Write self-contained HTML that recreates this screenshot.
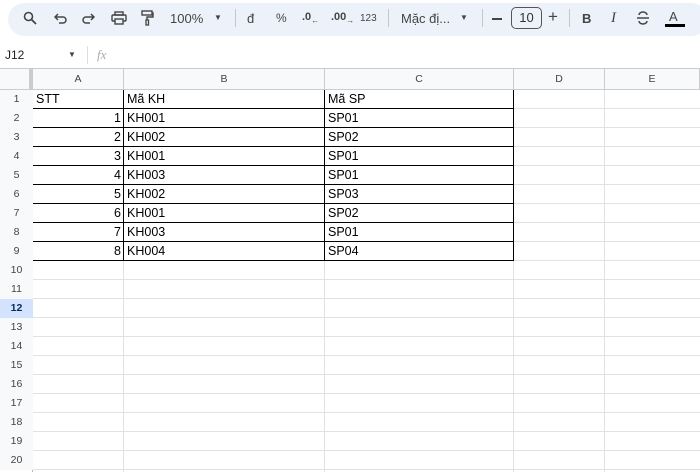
<!DOCTYPE html><html><head><meta charset="utf-8"><style>
*{margin:0;padding:0;box-sizing:border-box}
body{width:700px;height:472px;overflow:hidden;background:#fff;font-family:"Liberation Sans",Arial,sans-serif;position:relative;color:#222}
.a{position:absolute}
.tb{left:8px;top:3px;width:700px;height:33px;background:#edf2fa;border-radius:17px}
.t{position:absolute;top:11px;font-size:13px;color:#444}
.sep{position:absolute;top:9px;width:1px;height:18px;background:#c7c7c7}
.cell{position:absolute;font-size:12.5px;line-height:19px;height:19px;color:#000}
.rh{position:absolute;left:0;width:33px;text-align:center;font-size:10.5px;color:#444;line-height:19px;background:#f8f9fa}
.ch{position:absolute;top:69px;height:21px;line-height:21px;text-align:center;font-size:10.5px;color:#444;background:#f8f9fa;border-right:1px solid #ccc;border-bottom:1px solid #ccc}
</style></head><body>
<div class="a tb"></div>
<svg class="a" style="left:23px;top:11px" width="14" height="14" viewBox="0 0 14 14"><circle cx="5.5" cy="5.5" r="4" fill="none" stroke="#444" stroke-width="1.6"/><path d="M8.5 8.5L13 13" stroke="#444" stroke-width="1.8"/></svg>
<svg class="a" style="left:54px;top:12px" width="14" height="12" viewBox="0 0 14 12"><path d="M4 2L1 5l3 3M1 5h8a3 3 0 010 6H5" fill="none" stroke="#444" stroke-width="1.5"/></svg>
<svg class="a" style="left:81px;top:12px" width="14" height="12" viewBox="0 0 14 12"><path d="M10 2l3 3-3 3M13 5H5a3 3 0 000 6h4" fill="none" stroke="#444" stroke-width="1.5"/></svg>
<svg class="a" style="left:111px;top:11px" width="16" height="14" viewBox="0 0 16 14"><rect x="4" y="1" width="8" height="3" fill="none" stroke="#444" stroke-width="1.4"/><rect x="1" y="4" width="14" height="6" rx="1" fill="none" stroke="#444" stroke-width="1.4"/><rect x="4" y="8" width="8" height="5" fill="#edf2fa" stroke="#444" stroke-width="1.4"/></svg>
<svg class="a" style="left:141px;top:10px" width="13" height="16" viewBox="0 0 13 16"><rect x="1" y="1" width="10" height="4" fill="none" stroke="#444" stroke-width="1.4"/><path d="M11 3h1v4H6v3" fill="none" stroke="#444" stroke-width="1.4"/><rect x="5" y="10" width="2.5" height="5" fill="none" stroke="#444" stroke-width="1.3"/></svg>
<div class="t" style="left:170px;font-size:13px">100%</div>
<div class="t" style="left:214px;top:13px;font-size:8px">▼</div>
<div class="sep" style="left:235px"></div>
<div class="t" style="left:247px">đ</div>
<div class="t" style="left:276px;font-size:12px">%</div>
<div class="t" style="left:302px;font-size:11px;font-weight:bold">.0<sub style="font-size:8px">←</sub></div>
<div class="t" style="left:331px;font-size:11px;font-weight:bold">.00<sub style="font-size:8px">→</sub></div>
<div class="t" style="left:360px;font-size:10px;top:13px">123</div>
<div class="sep" style="left:388px"></div>
<div class="t" style="left:401px">Mặc đị...</div>
<div class="t" style="left:460px;top:13px;font-size:8px">▼</div>
<div class="sep" style="left:482px"></div>
<div class="a" style="left:492px;top:18px;width:10px;height:1.5px;background:#444"></div>
<div class="a" style="left:511px;top:7px;width:31px;height:22px;border:1px solid #555;border-radius:5px;font-size:13px;text-align:center;line-height:20px;color:#333">10</div>
<div class="t" style="left:548px;font-size:17px;top:7px">+</div>
<div class="sep" style="left:569px"></div>
<div class="t" style="left:582px;font-weight:bold">B</div>
<div class="t" style="left:611px;font-style:italic;font-family:'Liberation Serif',serif;font-size:15px;top:10px">I</div>
<svg class="a" style="left:636px;top:11px" width="14" height="14" viewBox="0 0 14 14"><path d="M3 4a4 3 0 018 0M3 10a4 3 0 008 0" fill="none" stroke="#444" stroke-width="1.5"/><path d="M1 7h12" stroke="#444" stroke-width="1.5"/></svg>
<div class="t" style="left:669px;top:9px">A</div>
<div class="a" style="left:665px;top:24px;width:20px;height:3px;background:#000"></div>
<div class="a" style="left:5px;top:48px;font-size:12px;color:#222">J12</div>
<div class="a" style="left:68px;top:50px;font-size:8px;color:#444">▼</div>
<div class="a" style="left:87px;top:46px;width:1px;height:18px;background:#ddd"></div>
<div class="a" style="left:97px;top:47px;font-size:13px;color:#aaa;font-style:italic;font-family:'Liberation Serif',serif">fx</div>
<div class="a" style="left:0;top:68px;width:700px;height:1px;background:#ccc"></div>
<div class="ch" style="left:0;width:33px;border-right:4px solid #ccc"></div>
<div class="ch" style="left:33px;width:91px">A</div>
<div class="ch" style="left:124px;width:201px">B</div>
<div class="ch" style="left:325px;width:189px">C</div>
<div class="ch" style="left:514px;width:91px">D</div>
<div class="ch" style="left:605px;width:95px">E</div>
<svg class="a" style="left:0;top:90px" width="700" height="382">
<g stroke="#e2e2e2" stroke-width="1">
<line x1="123.5" y1="0" x2="123.5" y2="382"/><line x1="324.5" y1="0" x2="324.5" y2="382"/><line x1="513.5" y1="0" x2="513.5" y2="382"/><line x1="604.5" y1="0" x2="604.5" y2="382"/>
<path d="M33 18.5H700M33 37.5H700M33 56.5H700M33 75.5H700M33 94.5H700M33 113.5H700M33 132.5H700M33 151.5H700M33 170.5H700M33 189.5H700M33 208.5H700M33 227.5H700M33 246.5H700M33 265.5H700M33 284.5H700M33 303.5H700M33 322.5H700M33 341.5H700M33 360.5H700M33 379.5H700"/>
</g>
<line x1="32.5" y1="0" x2="32.5" y2="382" stroke="#bbb"/>
<g stroke="#000" stroke-width="1"><path d="M33 18.5H513M33 37.5H513M33 56.5H513M33 75.5H513M33 94.5H513M33 113.5H513M33 132.5H513M33 151.5H513M33 170.5H513"/><path d="M123.5 0V171M324.5 0V171M513.5 0V171"/></g>
</svg>
<div class="rh" style="top:90px">1</div><div class="rh" style="top:109px">2</div><div class="rh" style="top:128px">3</div><div class="rh" style="top:147px">4</div><div class="rh" style="top:166px">5</div><div class="rh" style="top:185px">6</div><div class="rh" style="top:204px">7</div><div class="rh" style="top:223px">8</div><div class="rh" style="top:242px">9</div><div class="rh" style="top:261px">10</div><div class="rh" style="top:280px">11</div><div class="rh" style="top:299px;background:#d3e3fd;font-weight:bold;color:#0b2a5a">12</div><div class="rh" style="top:318px">13</div><div class="rh" style="top:337px">14</div><div class="rh" style="top:356px">15</div><div class="rh" style="top:375px">16</div><div class="rh" style="top:394px">17</div><div class="rh" style="top:413px">18</div><div class="rh" style="top:432px">19</div><div class="rh" style="top:451px">20</div>
<div class="cell" style="left:36px;top:90px">STT</div><div class="cell" style="left:127px;top:90px">Mã KH</div><div class="cell" style="left:328px;top:90px">Mã SP</div>
<div class="cell" style="left:33px;width:88px;text-align:right;top:109px">1</div><div class="cell" style="left:127px;top:109px">KH001</div><div class="cell" style="left:328px;top:109px">SP01</div>
<div class="cell" style="left:33px;width:88px;text-align:right;top:128px">2</div><div class="cell" style="left:127px;top:128px">KH002</div><div class="cell" style="left:328px;top:128px">SP02</div>
<div class="cell" style="left:33px;width:88px;text-align:right;top:147px">3</div><div class="cell" style="left:127px;top:147px">KH001</div><div class="cell" style="left:328px;top:147px">SP01</div>
<div class="cell" style="left:33px;width:88px;text-align:right;top:166px">4</div><div class="cell" style="left:127px;top:166px">KH003</div><div class="cell" style="left:328px;top:166px">SP01</div>
<div class="cell" style="left:33px;width:88px;text-align:right;top:185px">5</div><div class="cell" style="left:127px;top:185px">KH002</div><div class="cell" style="left:328px;top:185px">SP03</div>
<div class="cell" style="left:33px;width:88px;text-align:right;top:204px">6</div><div class="cell" style="left:127px;top:204px">KH001</div><div class="cell" style="left:328px;top:204px">SP02</div>
<div class="cell" style="left:33px;width:88px;text-align:right;top:223px">7</div><div class="cell" style="left:127px;top:223px">KH003</div><div class="cell" style="left:328px;top:223px">SP01</div>
<div class="cell" style="left:33px;width:88px;text-align:right;top:242px">8</div><div class="cell" style="left:127px;top:242px">KH004</div><div class="cell" style="left:328px;top:242px">SP04</div>
</body></html>
